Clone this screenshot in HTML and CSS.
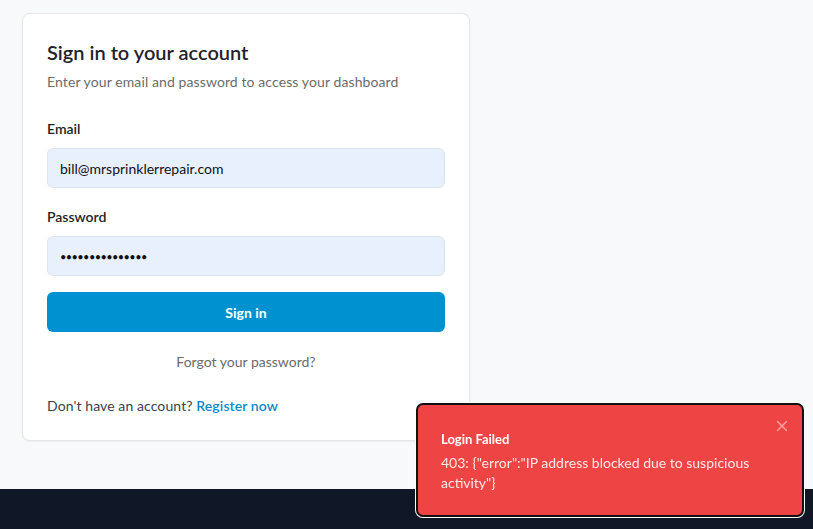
FILE: index.html
```html
<!DOCTYPE html>
<html lang="en">
<head>
<meta charset="utf-8">
<title>Sign in</title>
<link rel="stylesheet" href="styles.css">
</head>
<body>
<main class="main">
  <section class="card">
    <h1 class="title">Sign in to your account</h1>
    <p class="subtitle">Enter your email and password to access your dashboard</p>
    <form class="form">
      <div class="field">
        <label class="label">Email</label>
        <div class="input">bill@mrsprinklerrepair.com</div>
      </div>
      <div class="field">
        <label class="label">Password</label>
        <div class="input dots">•••••••••••••••</div>
      </div>
      <button type="button" class="btn">Sign in</button>
    </form>
    <p class="forgot">Forgot your password?</p>
    <p class="register">Don't have an account? <a class="link">Register now</a></p>
  </section>
</main>
<footer class="footer"></footer>
<div class="toast">
  <div class="toast-title">Login Failed</div>
  <div class="toast-msg">403: {"error":"IP address blocked due to suspicious activity"}</div>
  <svg class="toast-close" width="12" height="12" viewBox="0 0 12 12"><path d="M1.5 1.5 L10.5 10.5 M10.5 1.5 L1.5 10.5" stroke="currentColor" stroke-width="1.3" stroke-linecap="round"/></svg>
</div>
</body>
</html>
```
FILE: styles.css
```css
* { box-sizing: border-box; }
html, body { margin: 0; height: 100%; }
body {
  font-family: "Lato", "Noto Sans", sans-serif;
  background: #f8f9fb;
  color: #1f2937;
  display: flex;
  flex-direction: column;
  min-height: 100vh;
}
.main {
  flex: 1;
  padding: 13px 22px;
}
.card {
  width: 448px;
  background: #fff;
  border: 1px solid #e5e7eb;
  border-radius: 8px;
  box-shadow: 0 1px 2px rgba(0,0,0,0.05);
  padding: 24px 24px 24px;
}
.title {
  margin: 0;
  font-size: 20px;
  line-height: 28px;
  font-weight: 600;
  color: #1f2329;
}
.subtitle {
  margin: 6px 0 0;
  font-size: 14px;
  line-height: 20px;
  letter-spacing: 0.1px;
  color: #6b6b6b;
}
.form { margin-top: 27px; }
.field { margin-bottom: 19px; }
.field:last-of-type { margin-bottom: 16px; }
.label {
  display: block;
  font-size: 14px;
  line-height: 20px;
  font-weight: 600;
  color: #222;
  margin-bottom: 9px;
}
.input {
  height: 40px;
  border: 1px solid #dde3ec;
  border-radius: 6px;
  background: #e8f0fe;
  padding: 0 12px;
  display: flex;
  align-items: center;
  font-size: 14px;
  color: #111;
}
.dots { letter-spacing: -0.6px; font-size: 11px; }
.btn {
  display: block;
  width: 100%;
  height: 40px;
  border: none;
  border-radius: 6px;
  background: #0092d0;
  color: #fff;
  font-family: inherit;
  font-size: 14px;
  font-weight: 700;
  margin-top: 0;
}
.forgot {
  margin: 20px 0 0;
  text-align: center;
  font-size: 14px;
  line-height: 20px;
  color: #6b6b6b;
}
.register {
  margin: 24px 0 0;
  font-size: 14px;
  line-height: 20px;
  letter-spacing: 0.1px;
  color: #374151;
}
.link { color: #0a8ac4; font-weight: 600; }
.footer {
  height: 40px;
  background: #101828;
}
.toast {
  position: fixed;
  right: 9px;
  bottom: 12px;
  width: 388px;
  background: #ef4444;
  border: 2px solid #111;
  box-shadow: 0 0 0 1px #fff;
  border-radius: 7px;
  padding: 24px 23px 22px;
  color: #fff;
}
.toast-title {
  font-size: 13px;
  line-height: 20px;
  font-weight: 700;
}
.toast-msg {
  margin-top: 4px;
  font-size: 14px;
  line-height: 20px;
  color: #fde8e8;
}
.toast-close {
  position: absolute;
  top: 15px;
  right: 14px;
  color: #f9a8a8;
}
```
